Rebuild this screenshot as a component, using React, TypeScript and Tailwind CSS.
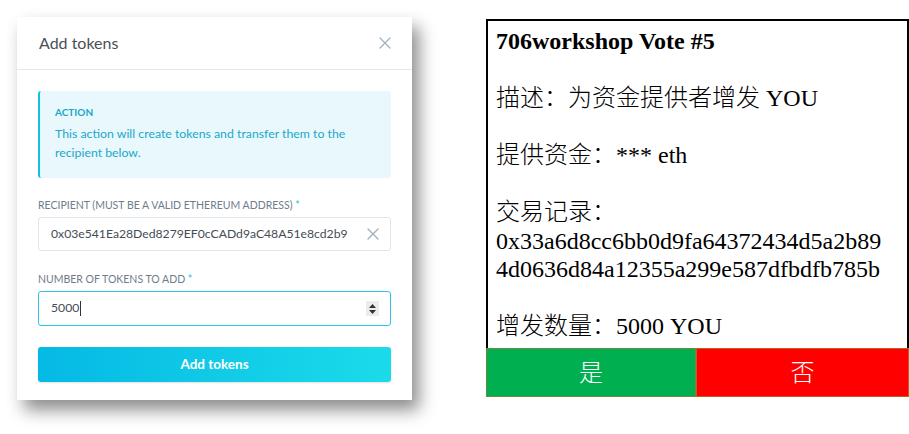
import React from "react";

function XIcon({ size = 12, color = "#9fb0bf", stroke = 1.4 }: { size?: number; color?: string; stroke?: number }) {
  return (
    <svg width={size} height={size} viewBox="0 0 12 12" fill="none">
      <path d="M1 1L11 11M11 1L1 11" stroke={color} strokeWidth={stroke} strokeLinecap="round" />
    </svg>
  );
}

function Spinner() {
  return (
    <div className="flex h-[15px] w-[13px] flex-col items-center justify-center gap-[2px] bg-[#ececec]">
      <svg width="7" height="4" viewBox="0 0 7 4"><path d="M3.5 0L7 4H0Z" fill="#333" /></svg>
      <svg width="7" height="4" viewBox="0 0 7 4"><path d="M0 0H7L3.5 4Z" fill="#333" /></svg>
    </div>
  );
}

function AddTokensCard() {
  return (
    <div
      className="flex h-[383px] w-[395px] flex-col bg-white shadow-[7px_10px_16px_rgba(0,0,0,0.45)]"
      style={{ fontFamily: "Lato, 'Open Sans', sans-serif" }}
    >
      <div className="flex h-[53px] items-center justify-between border-b border-[#e4e9ee] pl-[22px] pr-[21px]">
        <span className="text-[16px] text-[#4b4f56]">Add tokens</span>
        <XIcon size={12} color="#a3b2c0" stroke={1.3} />
      </div>
      <div className="flex flex-col px-[21px] pt-[21px]">
        <div className="flex h-[87px] flex-col rounded-[3px] border-l-2 border-[#13c0e3] bg-[#e8f8fc] pl-[15px] pt-[14px]">
          <div className="text-[10px] font-bold leading-[14px] text-[#1aa7c9]">ACTION</div>
          <div className="mt-[5px] text-[12.3px] leading-[19px] text-[#22a7c8]">
            This action will create tokens and transfer them to the
            <br />
            recipient below.
          </div>
        </div>
        <div className="mt-[20px] text-[10.5px] leading-[14px] text-[#6f7d8b]">
          RECIPIENT (MUST BE A VALID ETHEREUM ADDRESS) <span className="text-[#1ec0e3]">*</span>
        </div>
        <div className="mt-[5px] flex h-[34px] items-center justify-between rounded-[3px] border border-[#dfe5ea] pl-[12px] pr-[11px]">
          <span className="text-[12.2px] text-[#444c55]">0x03e541Ea28Ded8279EF0cCADd9aC48A51e8cd2b9</span>
          <XIcon size={12} color="#9fb0bf" stroke={1.4} />
        </div>
        <div className="mt-[21px] text-[10.5px] leading-[14px] text-[#6f7d8b]">
          NUMBER OF TOKENS TO ADD <span className="text-[#1ec0e3]">*</span>
        </div>
        <div className="mt-[5px] flex h-[35px] items-center justify-between rounded-[3px] border border-[#2ac6e8] pl-[12px] pr-[11px]">
          <span className="flex items-center text-[12.2px] text-[#444c55]">
            5000<span className="ml-[1px] inline-block h-[15px] w-[1px] bg-[#333]" />
          </span>
          <Spinner />
        </div>
        <div className="mt-[21px] flex h-[35px] items-center justify-center rounded-[3px] bg-gradient-to-r from-[#05b9e4] to-[#1bdbea] text-[13.5px] font-bold text-white shadow-[0_1px_2px_rgba(0,0,0,0.12)]">
          Add tokens
        </div>
      </div>
    </div>
  );
}

function VotePanel() {
  const font = { fontFamily: "'Liberation Serif', 'Noto Sans CJK SC', serif" };
  return (
    <div className="flex w-[423px] flex-col" style={font}>
      <div className="flex h-[329px] flex-col border-x-2 border-t-2 border-black pl-[8px] pt-[6px] text-[24px] font-light leading-[28.5px] text-black">
        <div className="font-bold">706workshop Vote #5</div>
        <div className="h-[28.5px]" />
        <div>描述：为资金提供者增发 YOU</div>
        <div className="h-[28.5px]" />
        <div>提供资金：*** eth</div>
        <div className="h-[28.5px]" />
        <div>交易记录：</div>
        <div>0x33a6d8cc6bb0d9fa64372434d5a2b89</div>
        <div>4d0636d84a12355a299e587dfbdfb785b</div>
        <div className="h-[28.5px]" />
        <div>增发数量：5000 YOU</div>
      </div>
      <div className="flex h-[49px]">
        <div className="flex w-[210px] items-center justify-center border border-[#6b8a3a] bg-[#00b050] text-[24px] font-light text-white">
          是
        </div>
        <div className="flex flex-1 items-center justify-center border border-[#c0601f] bg-[#ff0000] text-[24px] font-light text-white">
          否
        </div>
      </div>
    </div>
  );
}

export default function App() {
  return (
    <div className="h-[434px] w-[909px] overflow-hidden bg-white">
      <div className="flex items-start pl-[17px] pt-[17px]">
        <AddTokensCard />
        <div className="ml-[74px] mt-[2px]">
          <VotePanel />
        </div>
      </div>
    </div>
  );
}
